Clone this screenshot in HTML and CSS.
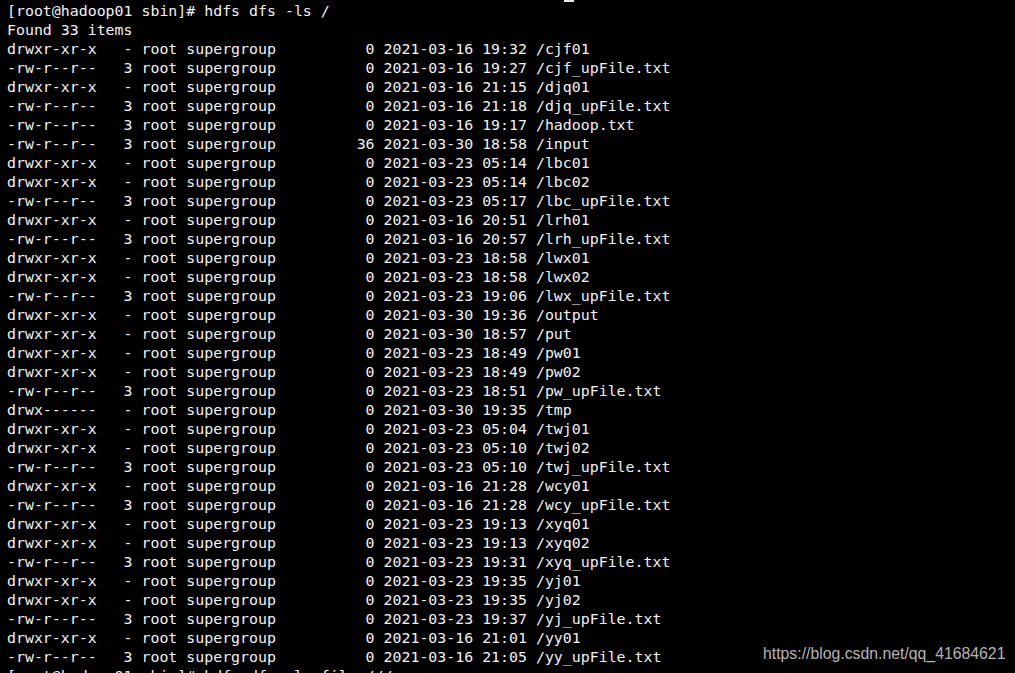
FILE: index.html
```html
<!DOCTYPE html>
<html>
<head>
<meta charset="utf-8">
<link rel="stylesheet" href="styles.css">
</head>
<body>
<div class="term">
<span class="cursor"></span>
<pre class="out">[root@hadoop01 sbin]# hdfs dfs -ls /
Found 33 items
drwxr-xr-x   - root supergroup          0 2021-03-16 19:32 /cjf01
-rw-r--r--   3 root supergroup          0 2021-03-16 19:27 /cjf_upFile.txt
drwxr-xr-x   - root supergroup          0 2021-03-16 21:15 /djq01
-rw-r--r--   3 root supergroup          0 2021-03-16 21:18 /djq_upFile.txt
-rw-r--r--   3 root supergroup          0 2021-03-16 19:17 /hadoop.txt
-rw-r--r--   3 root supergroup         36 2021-03-30 18:58 /input
drwxr-xr-x   - root supergroup          0 2021-03-23 05:14 /lbc01
drwxr-xr-x   - root supergroup          0 2021-03-23 05:14 /lbc02
-rw-r--r--   3 root supergroup          0 2021-03-23 05:17 /lbc_upFile.txt
drwxr-xr-x   - root supergroup          0 2021-03-16 20:51 /lrh01
-rw-r--r--   3 root supergroup          0 2021-03-16 20:57 /lrh_upFile.txt
drwxr-xr-x   - root supergroup          0 2021-03-23 18:58 /lwx01
drwxr-xr-x   - root supergroup          0 2021-03-23 18:58 /lwx02
-rw-r--r--   3 root supergroup          0 2021-03-23 19:06 /lwx_upFile.txt
drwxr-xr-x   - root supergroup          0 2021-03-30 19:36 /output
drwxr-xr-x   - root supergroup          0 2021-03-30 18:57 /put
drwxr-xr-x   - root supergroup          0 2021-03-23 18:49 /pw01
drwxr-xr-x   - root supergroup          0 2021-03-23 18:49 /pw02
-rw-r--r--   3 root supergroup          0 2021-03-23 18:51 /pw_upFile.txt
drwx------   - root supergroup          0 2021-03-30 19:35 /tmp
drwxr-xr-x   - root supergroup          0 2021-03-23 05:04 /twj01
drwxr-xr-x   - root supergroup          0 2021-03-23 05:10 /twj02
-rw-r--r--   3 root supergroup          0 2021-03-23 05:10 /twj_upFile.txt
drwxr-xr-x   - root supergroup          0 2021-03-16 21:28 /wcy01
-rw-r--r--   3 root supergroup          0 2021-03-16 21:28 /wcy_upFile.txt
drwxr-xr-x   - root supergroup          0 2021-03-23 19:13 /xyq01
drwxr-xr-x   - root supergroup          0 2021-03-23 19:13 /xyq02
-rw-r--r--   3 root supergroup          0 2021-03-23 19:31 /xyq_upFile.txt
drwxr-xr-x   - root supergroup          0 2021-03-23 19:35 /yj01
drwxr-xr-x   - root supergroup          0 2021-03-23 19:35 /yj02
-rw-r--r--   3 root supergroup          0 2021-03-23 19:37 /yj_upFile.txt
drwxr-xr-x   - root supergroup          0 2021-03-16 21:01 /yy01
-rw-r--r--   3 root supergroup          0 2021-03-16 21:05 /yy_upFile.txt
[root@hadoop01 sbin]# hdfs dfs -ls file:///</pre>
<span class="watermark">https://blog.csdn.net/qq_41684621</span>
</div>
</body>
</html>
```

FILE: styles.css
```css
html, body {
  margin: 0;
  padding: 0;
  background: #000;
  overflow: hidden;
}
.term {
  position: relative;
  width: 1015px;
  height: 673px;
  overflow: hidden;
  background: #000;
}
.out {
  margin: 0;
  padding: 2px 0 0 7px;
  font-family: "DejaVu Sans Mono", monospace;
  font-size: 14.9px;
  line-height: 19px;
  color: #f2f2f2;
  white-space: pre;
}
.cursor {
  position: absolute;
  left: 564px;
  top: 0;
  width: 10px;
  height: 2px;
  background: #e8e8e8;
}
.watermark {
  position: absolute;
  left: 763px;
  top: 644px;
  font-family: "Liberation Sans", Arial, sans-serif;
  font-size: 15.8px;
  line-height: 20px;
  color: #b4b4b4;
  background: rgba(0,0,0,0.3);
}
```
